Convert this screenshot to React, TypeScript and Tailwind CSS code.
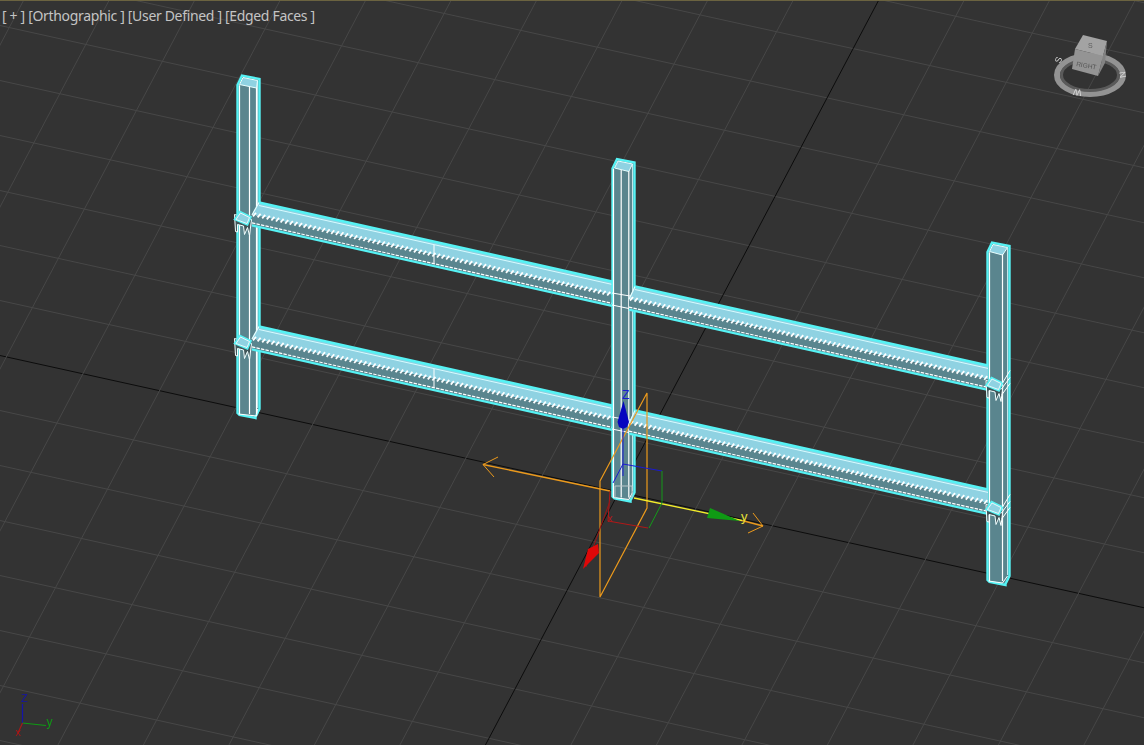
const CYAN = "#56f2f4";
const LIGHT = "#8fd2e2";
const DARK = "#5a858e";
const ORANGE = "#ec9a1c";

// ---- grid: two families of lines running through the world origin (619, 491)
const ORIGIN = { x: 619, y: 491 };
const SLOPE_A = 0.2205; // going right and down
const RUN_B = 0.528; // x lost for each y going down
const STEP_A = 55; // vertical spacing
const STEP_B = 85.5; // horizontal spacing

const gridLines = () => {
  const lines: { x1: number; y1: number; x2: number; y2: number; axis: boolean }[] = [];
  for (let i = -14; i <= 14; i++) {
    const y0 = ORIGIN.y - SLOPE_A * ORIGIN.x + i * STEP_A;
    lines.push({ x1: 0, y1: y0, x2: 1144, y2: y0 + SLOPE_A * 1144, axis: i === 0 });
  }
  for (let i = -14; i <= 14; i++) {
    const x0 = ORIGIN.x + RUN_B * ORIGIN.y + i * STEP_B;
    lines.push({ x1: x0, y1: 0, x2: x0 - RUN_B * 745, y2: 745, axis: i === 0 });
  }
  return lines;
};

const pts = (p: number[][]) => p.map((q) => q.join(",")).join(" ");

function Column({ dx, dy, marks }: { dx: number; dy: number; marks: number[] }) {
  const l = 237.5 + dx;
  const r = 259.5 + dx;
  const t = 84 + dy;
  const b = 412 + dy;
  const tip = 74.5 + dy;
  const edge = l + marks[marks.length - 1];
  return (
    <g>
      <polygon
        points={pts([[l, t], [l + 4.5, tip], [r, tip + 3.5], [r, b - 4], [r - 4, b + 4], [l + 18, b + 5], [l + 2, b + 2], [l, b]])}
        fill={DARK}
        stroke={CYAN}
        strokeWidth="2.4"
      />
      <polygon points={pts([[l + 2, t - 0.5], [l + 5.5, tip + 2], [r - 2, tip + 5], [edge, t + 3]])} fill={LIGHT} stroke="#e8ffff" strokeWidth="1" />
      {marks.map((m) => (
        <line key={m} x1={l + m} y1={t + (m / 23) * 3.5} x2={l + m} y2={b + 1} stroke="#ffffff" strokeWidth="1.2" />
      ))}
      <line x1={r - 2} y1={tip + 5} x2={r - 2} y2={b - 5} stroke="#dffcff" strokeWidth="0.8" />
      <line x1={l + 1} y1={b + 1} x2={edge} y2={b + 3} stroke="#ffffff" strokeWidth="1" />
      <line x1={edge} y1={b + 3} x2={r - 2} y2={b - 4} stroke="#ffffff" strokeWidth="1" />
    </g>
  );
}

// one stretch of beam between x0 and x1; dy moves it down to the lower floor
function Beam({ x0, x1, dy, lean }: { x0: number; x1: number; dy: number; lean: number }) {
  const top = (x: number) => 201.5 + dy + 0.2235 * (x - 259);
  const hatch: number[] = [];
  for (let x = x0 + 1; x < x1 - 2; x += 4.6) hatch.push(x);
  const xs = x0 + lean;
  return (
    <g>
      <polygon points={pts([[xs, top(xs)], [x1, top(x1)], [x1, top(x1) + 13.5], [x0, top(x0) + 13.5]])} fill={LIGHT} />
      <polygon points={pts([[x0, top(x0) + 13.5], [x1, top(x1) + 13.5], [x1, top(x1) + 24], [x0, top(x0) + 24]])} fill={DARK} />
      <line x1={xs} y1={top(xs) + 3} x2={x1} y2={top(x1) + 3} stroke="#d8fbff" strokeWidth="1" />
      <line x1={xs} y1={top(xs)} x2={x1} y2={top(x1)} stroke={CYAN} strokeWidth="2.6" />
      {hatch.map((x) => (
        <line key={x} x1={x} y1={top(x) + 15.2} x2={x + 3} y2={top(x) + 11.6} stroke="#ffffff" strokeWidth="1.8" />
      ))}
      <line x1={x0} y1={top(x0) + 22} x2={x1} y2={top(x1) + 22} stroke="#ffffff" strokeWidth="1.2" strokeDasharray="3.4 1.2" />
      <line x1={x0} y1={top(x0) + 24.5} x2={x1} y2={top(x1) + 24.5} stroke={CYAN} strokeWidth="2.2" />
      {lean > 0 && <line x1={xs} y1={top(xs)} x2={x0} y2={top(x0) + 14} stroke="#e8ffff" strokeWidth="1.2" />}
    </g>
  );
}

function Bracket({ x, y, right }: { x: number; y: number; right?: boolean }) {
  return (
    <g>
      <polygon points={pts([[x, y + 3], [x + 1, y + 20], [x + 3, y + 20.5], [x + 3, y + 13], [x + 9, y + 14.5], [x + 10, y + 23], [x + 13, y + 16], [x + 15, y + 24], [x + 17, y + 8]])} fill="#3f5559" stroke="#f2ffff" strokeWidth="1" />
      <polygon points={pts([[x, y + 8], [x + 5.5, y], [x + 16.5, y + 5.5], [x + 13, y + 13.5]])} fill={LIGHT} stroke={CYAN} strokeWidth="1.6" />
      <polygon points={pts([[x + 1.5, y + 8], [x + 6, y + 1.5], [x + 15, y + 6], [x + 12.5, y + 12]])} fill="none" stroke="#ffffff" strokeWidth="0.8" />
      {right && (
        <g stroke="#ffffff" strokeWidth="1" fill="none">
          <line x1={x + 16.5} y1={y + 5.5} x2={x + 24} y2={y - 7} />
          <polyline points={pts([[x + 16, y + 17], [x + 24, y + 6]])} />
          <line x1={x + 15} y1={y + 12} x2={x + 24} y2={y} />
        </g>
      )}
    </g>
  );
}

function Ticks({ dy }: { dy: number }) {
  return (
    <g stroke="#ffffff" strokeWidth="1">
      <line x1="434" y1={244 + dy} x2="434" y2={262 + dy} />
      <line x1="808" y1={327 + dy} x2="808" y2={345 + dy} />
    </g>
  );
}

function Structure() {
  return (
    <g>
      <Column dx={0} dy={0} marks={[2, 12, 19]} />
      <Column dx={750} dy={167} marks={[2, 15]} />
      <Beam x0={252} x1={612} dy={0} lean={7} />
      <Beam x0={252} x1={612} dy={124} lean={7} />
      <Ticks dy={0} />
      <Ticks dy={124} />
      <Column dx={375} dy={83.5} marks={[1, 8.7, 16.3]} />
      {[0, 124].map((dy) => (
        <g key={dy} stroke="#ffffff" strokeWidth="1">
          <line x1="612" y1={292 + dy} x2="636" y2={296 + dy} />
          <line x1="612" y1={304 + dy} x2="636" y2={309 + dy} />
        </g>
      ))}
      <Beam x0={629} x1={988} dy={0} lean={6} />
      <Beam x0={629} x1={988} dy={124} lean={6} />
      <Bracket x={234.5} y={210.5} />
      <Bracket x={234.5} y={334.5} />
      <Bracket x={986} y={376.5} right />
      <Bracket x={986} y={500.5} right />
      <polyline points="615,497 615,485 632,485 632,497" fill="none" stroke="#b8c6c8" strokeWidth="1" />
    </g>
  );
}

function Gizmo() {
  return (
    <g fill="none" strokeWidth="1">
      <polygon points="600,480 647,392 647,507 600,596" stroke={ORANGE} strokeWidth="1.2" />
      <polyline points="498,456 483,463.5 494,476" stroke={ORANGE} />
      <line x1="483" y1="463.5" x2="610" y2="490" stroke={ORANGE} strokeWidth="1.3" />
      <line x1="634" y1="497" x2="742" y2="519.5" stroke="#f5ee2a" strokeWidth="1.3" />
      <line x1="742" y1="519.5" x2="763" y2="525" stroke={ORANGE} strokeWidth="1.3" />
      <polyline points="753,512 763,525 748,532" stroke={ORANGE} />
      <polygon points="710,507 707,517 740,520" fill="#0f9a14" />
      <polyline points="623,463 613,482" stroke="#1a1ad0" />
      <polyline points="623,463 662,470" stroke="#1a1ad0" />
      <line x1="623" y1="428" x2="623" y2="475" stroke="#1a1ad0" />
      <polygon points="623.5,400 617.5,421 619,426 623,428 627,426 629,421" fill="#0606c0" />
      <polyline points="662,470 662,502 649,527" stroke="#149a1a" />
      <polyline points="610,490 608,520 648,527" stroke="#b01818" />
      <line x1="610" y1="500" x2="586" y2="566" stroke="#9c1414" />
      <polygon points="598,543 599,552 583,568 588,548" fill="#e00808" />
      <text x="622" y="398" fontSize="12" fill="#1a1ad0" fontFamily="'Liberation Sans', sans-serif">Z</text>
      <text x="741" y="520" fontSize="13" fill="#e8e23a" fontFamily="'Liberation Sans', sans-serif">y</text>
      <text x="607" y="521" fontSize="11" fill="#b01818" fontFamily="'Liberation Sans', sans-serif">x</text>
    </g>
  );
}

function ViewCube() {
  return (
    <g className="blur-[0.6px]">
      <ellipse cx="1090" cy="74" rx="33" ry="19" fill="none" stroke="#939393" strokeWidth="6" />
      <ellipse cx="1090" cy="74" rx="28.5" ry="15.5" fill="none" stroke="#5a5a5a" strokeWidth="3" />
      <polygon points="1083,34 1107,40 1103,55 1075,48" fill="#a3a3a3" />
      <polygon points="1075,48 1103,55 1098,75 1072,68" fill="#949494" />
      <polygon points="1107,40 1103,55 1098,75 1105,62" fill="#838383" />
      <text x="1076" y="65" fontSize="6.5" fill="#555555" transform="rotate(10 1076 65)" fontFamily="'Liberation Sans', sans-serif">RIGHT</text>
      <text x="1088" y="47" fontSize="7" fill="#5e5e5e" fontFamily="'Liberation Sans', sans-serif">S</text>
      <text x="1060" y="63" fontSize="9" fill="#d8d8d8" transform="rotate(-65 1060 63)" fontFamily="'Liberation Sans', sans-serif">S</text>
      <text x="1119" y="71" fontSize="9" fill="#d8d8d8" transform="rotate(80 1119 71)" fontFamily="'Liberation Sans', sans-serif">N</text>
      <text x="1082" y="89" fontSize="9" fill="#d8d8d8" transform="rotate(188 1082 89)" fontFamily="'Liberation Sans', sans-serif">W</text>
    </g>
  );
}

function WorldAxes() {
  return (
    <g strokeWidth="1.2" className="blur-[0.3px]">
      <line x1="22.5" y1="703" x2="22.5" y2="722" stroke="#1414a8" />
      <line x1="22.5" y1="722" x2="46" y2="724.5" stroke="#0f9a14" />
      <line x1="22.5" y1="722" x2="17.5" y2="733" stroke="#a81818" />
      <text x="21" y="701" fontSize="11" fill="#1414a8" fontFamily="'Liberation Sans', sans-serif">Z</text>
      <text x="46.5" y="725" fontSize="12" fill="#0f9a14" fontFamily="'Liberation Sans', sans-serif">y</text>
      <text x="15.5" y="735" fontSize="11" fill="#a81818" fontFamily="'Liberation Sans', sans-serif">x</text>
    </g>
  );
}

export default function App() {
  return (
    <div className="relative w-[1144px] h-[745px] overflow-hidden bg-[#333333] border-t border-[#6b6340]">
      <svg className="absolute left-0 top-0" width="1144" height="745" viewBox="0 0 1144 745">
        {gridLines().map((l, i) => (
          <line key={i} x1={l.x1} y1={l.y1} x2={l.x2} y2={l.y2} stroke={l.axis ? "#0c0c0c" : "#474747"} strokeWidth="1" />
        ))}
        <Structure />
        <Gizmo />
        <ViewCube />
        <WorldAxes />
      </svg>
      <div className="absolute left-[2px] top-[6px] text-[14px] tracking-[-0.33px] leading-[18px] text-[#c4c4c4] whitespace-pre font-['Noto_Sans',sans-serif]">
        [ + ] [Orthographic ] [User Defined ] [Edged Faces ]
      </div>
    </div>
  );
}
